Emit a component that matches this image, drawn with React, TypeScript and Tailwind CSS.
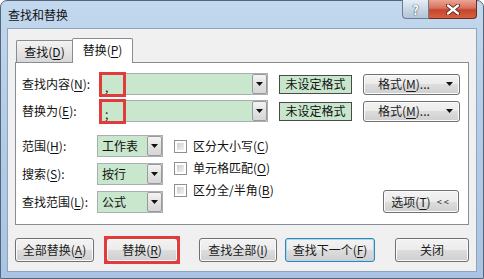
import type { ReactNode } from "react";

const btnBase =
  "flex items-center justify-center rounded-[3px] border bg-[linear-gradient(to_bottom,#f3f3f3_0%,#ebebeb_50%,#dddddd_50%,#cfcfcf_100%)] text-[12px] leading-none text-[#1b1b1b]";

function U({ children }: { children: ReactNode }) {
  return <span className="underline underline-offset-2">{children}</span>;
}

function Arrow() {
  return (
    <svg width="7" height="4" viewBox="0 0 7 4">
      <path d="M0 0h7L3.5 4z" fill="#111" />
    </svg>
  );
}

function DropButton() {
  return (
    <div className="ml-auto flex h-full w-[15px] items-center justify-center rounded-[2px] border border-[#9a9a9a] bg-[linear-gradient(to_bottom,#f4f4f4,#e2e2e2_50%,#d6d6d6)]">
      <Arrow />
    </div>
  );
}

function Combo({ text, width }: { text: string; width: string }) {
  return (
    <div className={`flex h-[22px] ${width} items-center border border-[#abadb3] bg-[#c9e7cd]`}>
      <span className="pl-[4px] text-[12px] leading-none text-[#111]">{text}</span>
      <DropButton />
    </div>
  );
}

function Check({ children }: { children: ReactNode }) {
  return (
    <div className="flex h-[22px] items-center">
      <span className="relative h-[13px] w-[13px] border border-[#8e8f8f] bg-white">
        <span className="absolute inset-[2px] bg-[linear-gradient(135deg,#c9ccd1,#f4f4f4)]" />
      </span>
      <span className="ml-[6px] text-[12px] leading-none text-[#111]">{children}</span>
    </div>
  );
}

function FormatRow({ label, value }: { label: ReactNode; value: string }) {
  return (
    <div className="flex h-[22px] items-center">
      <div className="w-[78px] text-[12px] leading-none text-[#111]">{label}</div>
      <div className="relative flex h-[22px] w-[168px] items-center border border-[#abadb3] bg-[#c9e7cd]">
        <span className="pl-[4px] pt-[6px] text-[12px] leading-none text-[#111]">{value}</span>
        <DropButton />
        <span className="absolute left-[-2px] top-[-2px] h-[25px] w-[27px] border-[3px] border-[#e23b3b]" />
      </div>
      <div className="ml-[11px] flex h-[19px] w-[73px] items-center justify-center border border-[#4a4a4a] bg-[#c7e6cc] text-[12px] leading-none text-[#111]">
        未设定格式
      </div>
      <div className={`${btnBase} ml-[11px] h-[21px] w-[97px] border-[#707070] shadow-[inset_0_0_0_1px_#fbfbfb]`}>
        <span className="ml-[14px]">
          格式(<U>M</U>)...
        </span>
        <span className="ml-auto mr-[6px] flex">
          <Arrow />
        </span>
      </div>
    </div>
  );
}

export default function App() {
  return (
    <div className="relative h-[279px] w-[484px] overflow-hidden bg-white font-['Noto_Sans_CJK_SC','Noto_Sans',sans-serif]">
      <div className="flex h-full w-full flex-col rounded-t-[7px] border border-[#56667a] bg-[linear-gradient(to_bottom,#c2d8ee,#b4cde8_40%,#a9c4e3)]">
        {/* Title bar */}
        <div className="flex h-[27px] items-center pl-[7px] text-[12px] leading-none text-[#111]">
          查找和替换
        </div>

        {/* Client area */}
        <div className="mx-[6px] flex h-[244px] flex-col border border-[#8fa3ba] bg-[#f0f0f0] px-[7px]">
          {/* Tabs */}
          <div className="mt-[9px] flex h-[24px] items-end pl-[1px]">
            <div className="flex h-[22px] w-[56px] items-center justify-center rounded-tl-[2px] border-l border-t border-[#898c95] bg-[linear-gradient(to_bottom,#f3f3f3,#e6e6e6_50%,#d7d7d7)] text-[12px] leading-none text-[#111]">
              查找(<U>D</U>)
            </div>
            <div className="relative z-10 mb-[-1px] flex h-[25px] w-[61px] items-center justify-center rounded-t-[2px] border-x border-t border-[#898c95] bg-white pb-[2px] text-[12px] leading-none text-[#111]">
              替换(<U>P</U>)
            </div>
          </div>

          {/* Panel */}
          <div className="flex h-[163px] flex-col border border-[#898c95] bg-white pl-[6px] pt-[10px]">
            <FormatRow
              label={
                <>
                  查找内容(<U>N</U>):
                </>
              }
              value=","
            />
            <div className="mt-[5px]">
              <FormatRow
                label={
                  <>
                    替换为(<U>E</U>):
                  </>
                }
                value=";"
              />
            </div>

            <div className="mt-[13px] flex">
              <div className="flex flex-col gap-[6px]">
                {[
                  { l: "范围", k: "H", v: "工作表" },
                  { l: "搜索", k: "S", v: "按行" },
                  { l: "查找范围", k: "L", v: "公式" },
                ].map((r) => (
                  <div key={r.k} className="flex h-[22px] items-center">
                    <div className="w-[75px] text-[12px] leading-none text-[#111]">
                      {r.l}(<U>{r.k}</U>):
                    </div>
                    <Combo text={r.v} width="w-[66px]" />
                  </div>
                ))}
              </div>

              <div className="ml-[11px] flex flex-col">
                <Check>
                  区分大小写(<U>C</U>)
                </Check>
                <Check>
                  单元格匹配(<U>O</U>)
                </Check>
                <Check>
                  区分全/半角(<U>B</U>)
                </Check>
              </div>

              <div className="flex flex-1 items-end justify-end pr-[9px]">
                <div className={`${btnBase} h-[23px] w-[76px] border-[#707070] shadow-[inset_0_0_0_1px_#fbfbfb]`}>
                  选项(<U>T</U>)
                  <span className="ml-[6px] text-[9px] tracking-[2px]">&lt;&lt;</span>
                </div>
              </div>
            </div>
          </div>

          {/* Bottom buttons */}
          <div className="mt-[13px] flex h-[24px]">
            <div className={`${btnBase} h-[24px] w-[79px] border-[#707070] shadow-[inset_0_0_0_1px_#fbfbfb]`}>
              全部替换(<U>A</U>)
            </div>
            <div className="relative ml-[12px]">
              <div className={`${btnBase} h-[24px] w-[72px] border-[#707070] shadow-[inset_0_0_0_1px_#fbfbfb]`}>
                替换(<U>R</U>)
              </div>
              <span className="absolute left-[-2px] top-[-2px] h-[28px] w-[76px] border-[3px] border-[#e23b3b]" />
            </div>
            <div className={`${btnBase} ml-[21px] h-[24px] w-[78px] border-[#707070] shadow-[inset_0_0_0_1px_#fbfbfb]`}>
              查找全部(<U>I</U>)
            </div>
            <div className={`${btnBase} ml-[8px] h-[24px] w-[90px] border-[#3c7fb1] shadow-[inset_0_0_0_1px_#9fdcf7]`}>
              查找下一个(<U>F</U>)
            </div>
            <div className={`${btnBase} ml-[20px] h-[24px] w-[74px] border-[#707070] shadow-[inset_0_0_0_1px_#fbfbfb]`}>
              关闭
            </div>
          </div>
        </div>
      </div>

      {/* Caption buttons */}
      <div className="absolute right-[7px] top-0 flex h-[19px]">
        <div className="flex w-[27px] items-center justify-center rounded-bl-[4px] border border-t-0 border-[#6c7d92] bg-[linear-gradient(to_bottom,#e6eef6,#c9d7e6_50%,#b2c4d8)]">
          <span className="text-[13px] font-bold leading-none text-white [text-shadow:0_0_1px_#33404f,0_0_1px_#33404f]">
            ?
          </span>
        </div>
        <div className="flex w-[48px] items-center justify-center rounded-br-[4px] border border-l-0 border-t-0 border-[#6e2a1f] bg-[linear-gradient(to_bottom,#eba595,#d8705a_45%,#c6442c_55%,#d6613f)]">
          <svg width="14" height="11" viewBox="0 0 14 11">
            <path d="M2 1.5l10 8M12 1.5l-10 8" stroke="#4a1a12" strokeWidth="4" strokeLinecap="round" />
            <path d="M2 1.5l10 8M12 1.5l-10 8" stroke="#fff" strokeWidth="2.4" strokeLinecap="round" />
          </svg>
        </div>
      </div>
    </div>
  );
}
